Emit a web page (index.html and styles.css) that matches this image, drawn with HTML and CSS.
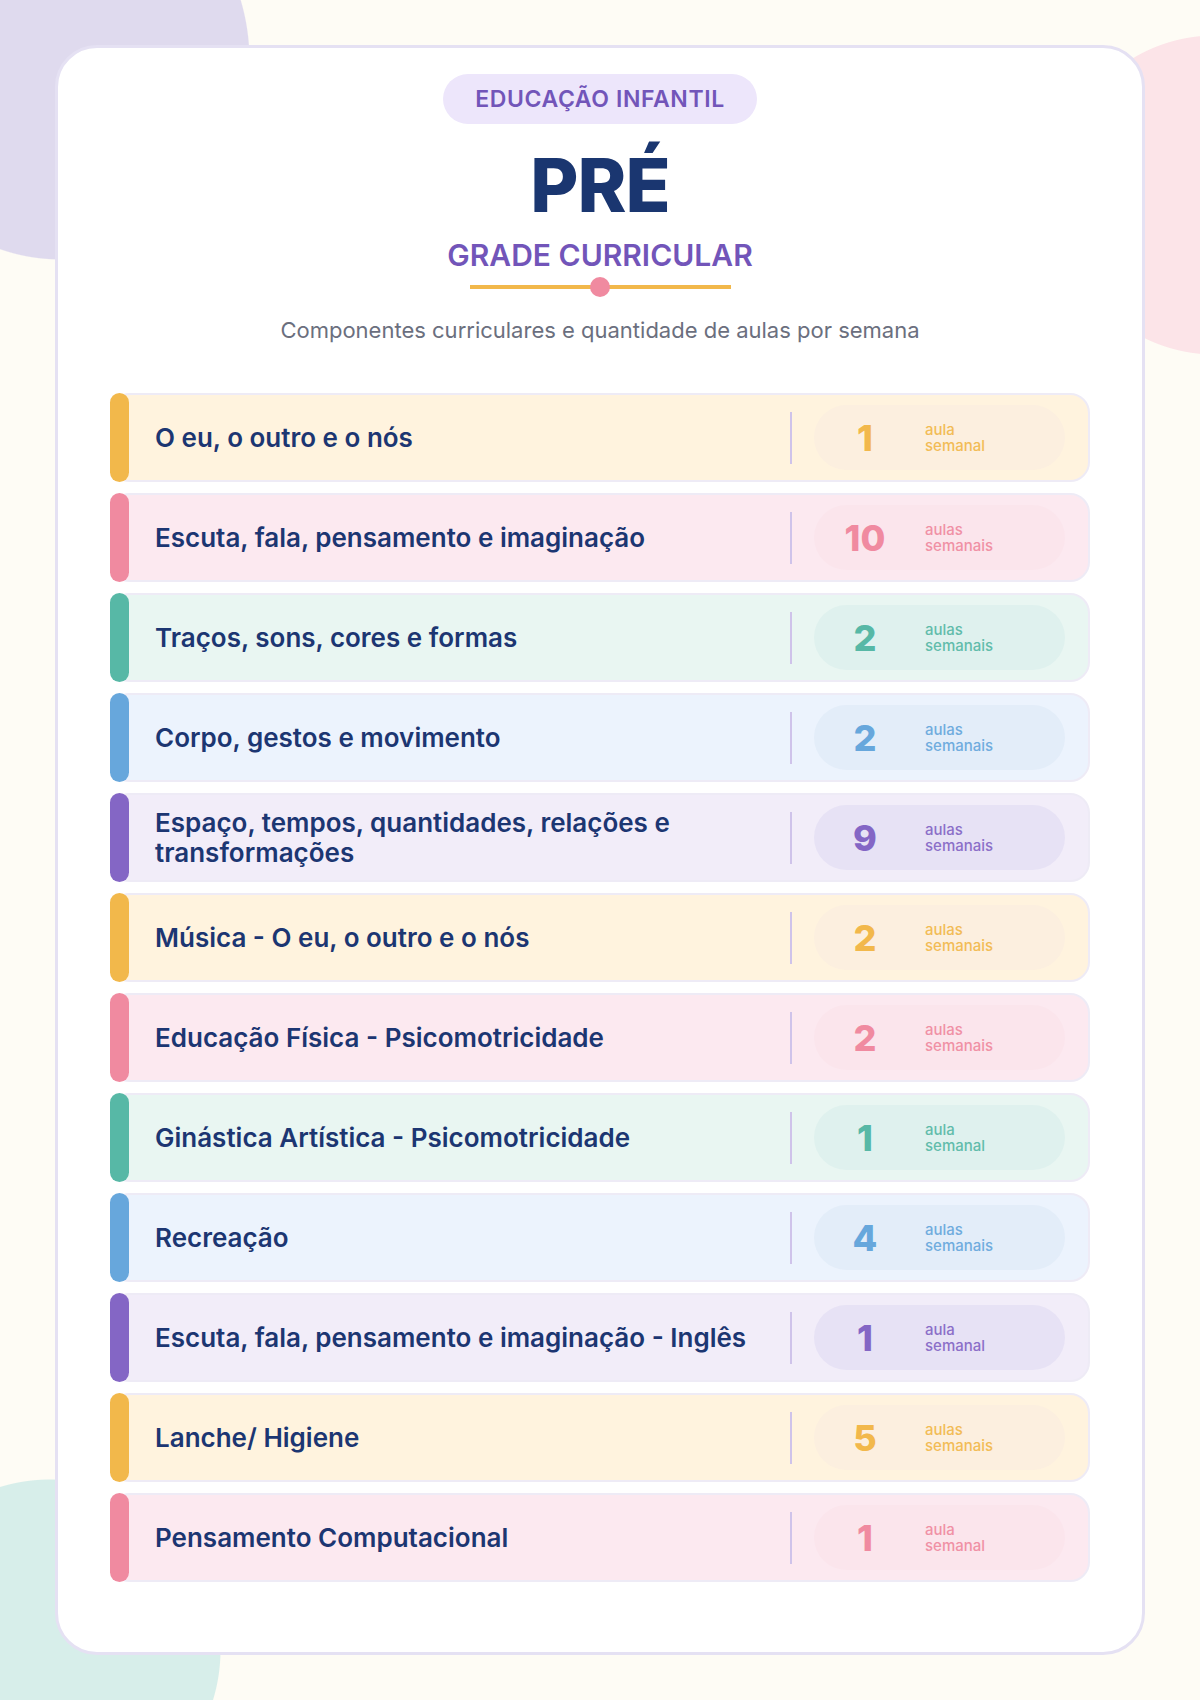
FILE: index.html
```html
<!DOCTYPE html>
<html lang="pt-BR">
<head>
<meta charset="utf-8">
<title>Pré - Grade Curricular</title>
<link rel="stylesheet" href="styles.css">
</head>
<body>
<main class="card">
  <header class="head">
    <div class="badge">EDUCAÇÃO INFANTIL</div>
    <h1 class="title">PRÉ</h1>
    <h2 class="subtitle">GRADE CURRICULAR</h2>
    <div class="decor"><span class="dot"></span></div>
    <p class="desc">Componentes curriculares e quantidade de aulas por semana</p>
  </header>

  <ul class="list">
    <li class="row t-orange"><span class="stripe"></span><span class="name">O eu, o outro e o nós</span><span class="divider"></span><span class="pill"><span class="num">1</span><span class="unit"><span>aula</span><span>semanal</span></span></span></li>
    <li class="row t-pink"><span class="stripe"></span><span class="name">Escuta, fala, pensamento e imaginação</span><span class="divider"></span><span class="pill"><span class="num">10</span><span class="unit"><span>aulas</span><span>semanais</span></span></span></li>
    <li class="row t-teal"><span class="stripe"></span><span class="name">Traços, sons, cores e formas</span><span class="divider"></span><span class="pill"><span class="num">2</span><span class="unit"><span>aulas</span><span>semanais</span></span></span></li>
    <li class="row t-blue"><span class="stripe"></span><span class="name">Corpo, gestos e movimento</span><span class="divider"></span><span class="pill"><span class="num">2</span><span class="unit"><span>aulas</span><span>semanais</span></span></span></li>
    <li class="row t-purple"><span class="stripe"></span><span class="name">Espaço, tempos, quantidades, relações e transformações</span><span class="divider"></span><span class="pill"><span class="num">9</span><span class="unit"><span>aulas</span><span>semanais</span></span></span></li>
    <li class="row t-orange"><span class="stripe"></span><span class="name">Música - O eu, o outro e o nós</span><span class="divider"></span><span class="pill"><span class="num">2</span><span class="unit"><span>aulas</span><span>semanais</span></span></span></li>
    <li class="row t-pink"><span class="stripe"></span><span class="name">Educação Física - Psicomotricidade</span><span class="divider"></span><span class="pill"><span class="num">2</span><span class="unit"><span>aulas</span><span>semanais</span></span></span></li>
    <li class="row t-teal"><span class="stripe"></span><span class="name">Ginástica Artística - Psicomotricidade</span><span class="divider"></span><span class="pill"><span class="num">1</span><span class="unit"><span>aula</span><span>semanal</span></span></span></li>
    <li class="row t-blue"><span class="stripe"></span><span class="name">Recreação</span><span class="divider"></span><span class="pill"><span class="num">4</span><span class="unit"><span>aulas</span><span>semanais</span></span></span></li>
    <li class="row t-purple"><span class="stripe"></span><span class="name">Escuta, fala, pensamento e imaginação - Inglês</span><span class="divider"></span><span class="pill"><span class="num">1</span><span class="unit"><span>aula</span><span>semanal</span></span></span></li>
    <li class="row t-orange"><span class="stripe"></span><span class="name">Lanche/ Higiene</span><span class="divider"></span><span class="pill"><span class="num">5</span><span class="unit"><span>aulas</span><span>semanais</span></span></span></li>
    <li class="row t-pink"><span class="stripe"></span><span class="name">Pensamento Computacional</span><span class="divider"></span><span class="pill"><span class="num">1</span><span class="unit"><span>aula</span><span>semanal</span></span></span></li>
  </ul>
</main>
</body>
</html>
```

FILE: styles.css
```css
* { box-sizing: border-box; }

html, body {
  margin: 0;
  padding: 0;
}

body {
  min-height: 1700px;
  padding-top: 45px;
  font-family: "Inter", "Noto Sans", "Liberation Sans", sans-serif;
  background-color: #fefcf5;
  background-repeat: no-repeat;
  background-image:
    radial-gradient(ellipse 190px 200px at 60px 60px, #dfdaee 99.4%, rgba(223, 218, 238, 0) 100%),
    radial-gradient(circle 160px at 1215px 195px, #fce4e8 99.4%, rgba(252, 228, 232, 0) 100%),
    radial-gradient(circle 171px at 50px 1650px, #d7eeea 99.4%, rgba(215, 238, 234, 0) 100%);
}

.card {
  width: 1090px;
  margin: 0 auto;
  background: #ffffff;
  border: 3px solid #e5e1f3;
  border-radius: 42px;
  padding: 26px 52px 70px;
}

.head {
  display: flex;
  flex-direction: column;
  align-items: center;
}

.badge {
  height: 50px;
  display: inline-flex;
  align-items: center;
  padding: 0 32px;
  border-radius: 25px;
  background: #ede6fb;
  color: #7255b9;
  font-size: 23px;
  font-weight: 600;
  letter-spacing: 0.6px;
}

.title {
  margin: 24px 0 0;
  font-size: 74px;
  line-height: 74px;
  font-weight: 800;
  color: #1a3670;
  letter-spacing: -1px;
}

.subtitle {
  margin: 15px 0 0;
  font-size: 30px;
  line-height: 36px;
  font-weight: 600;
  color: #7255b9;
}

.decor {
  margin-top: 4px;
  width: 261px;
  height: 20px;
  display: flex;
  align-items: center;
  justify-content: center;
  background: linear-gradient(#f2b84b, #f2b84b) center / 100% 4px no-repeat;
}
.dot {
  width: 20px;
  height: 20px;
  border-radius: 50%;
  background: #f08aa0;
}

.desc {
  margin: 19px 0 0;
  font-size: 22px;
  line-height: 29px;
  color: #6b6f7e;
  font-weight: 400;
}

.list {
  list-style: none;
  margin: 48px 0 0;
  padding: 0;
  display: flex;
  flex-direction: column;
  gap: 11px;
}

.row {
  display: flex;
  align-items: center;
  height: 89px;
  border: 2px solid #eeebf6;
  border-radius: 20px;
}

.stripe {
  align-self: stretch;
  width: 19px;
  margin: -2px 0 -2px -2px;
  border-radius: 10px;
  flex: none;
}

.name {
  flex: 1;
  padding-left: 26px;
  font-size: 26px;
  line-height: 1.13;
  font-weight: 600;
  color: #1c3672;
}

.divider {
  flex: none;
  width: 2px;
  height: 52px;
  margin: 0 22px 0 24px;
  background: #cfc3ea;
}

.pill {
  flex: none;
  width: 251px;
  height: 65px;
  margin-right: 23px;
  border-radius: 33px;
  display: flex;
  align-items: center;
  padding-left: 19px;
}

.num {
  width: 64px;
  text-align: center;
  font-size: 36px;
  line-height: 1;
  font-weight: 800;
}

.unit {
  margin-left: 28px;
  display: flex;
  flex-direction: column;
  font-size: 15px;
  line-height: 16px;
  font-weight: 500;
  opacity: 0.92;
}

/* themes */
.t-orange { background: #fff3de; }
.t-orange .stripe { background: #f2b84b; }
.t-orange .pill { background: #fcefdf; color: #f2b84b; }

.t-pink { background: #fce9f0; }
.t-pink .stripe { background: #f08aa0; }
.t-pink .pill { background: #fbe5ec; color: #f08aa0; }

.t-teal { background: #e9f6f2; }
.t-teal .stripe { background: #57b8a6; }
.t-teal .pill { background: #dff1ee; color: #57b8a6; }

.t-blue { background: #ecf3fd; }
.t-blue .stripe { background: #67a7dc; }
.t-blue .pill { background: #e3edf9; color: #67a7dc; }

.t-purple { background: #f2edf9; }
.t-purple .stripe { background: #8466c5; }
.t-purple .pill { background: #e7e2f5; color: #8466c5; }
```
